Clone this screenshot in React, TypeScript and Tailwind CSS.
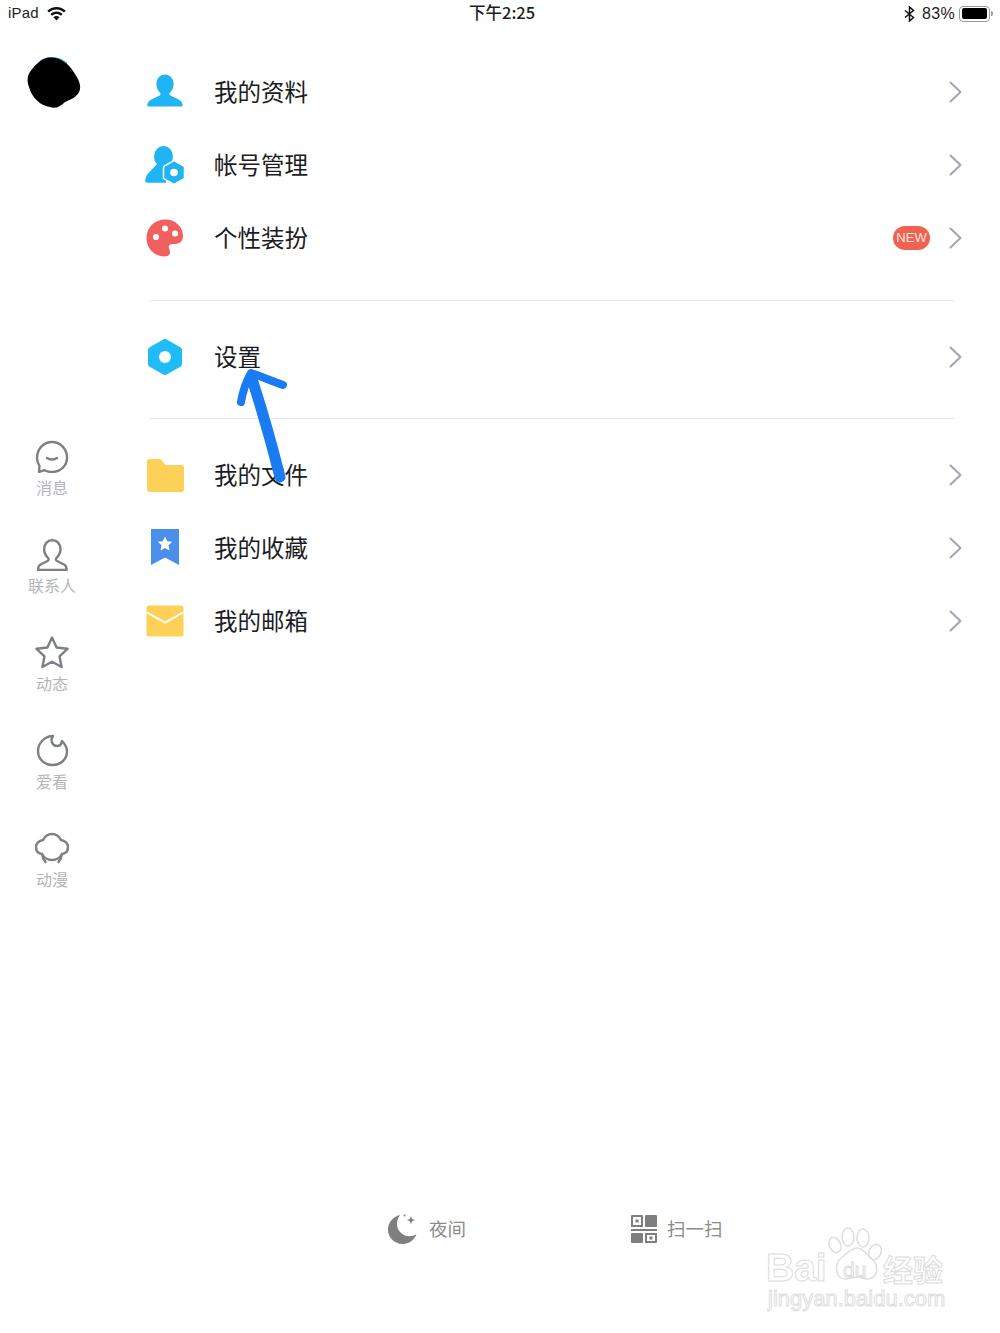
import React from 'react';

const cjk = "font-['Noto_Sans_CJK_SC','Noto_Sans',sans-serif]";

const Chevron = () => (
  <svg width="13" height="22" viewBox="0 0 13 22" fill="none" stroke="#a3a5b3" strokeWidth="2" strokeLinecap="round" strokeLinejoin="round">
    <path d="M1.500 1.500 L11.500 11 L1.500 20.500" />
  </svg>
);

const UserIcon = () => (
  <svg width="42" height="42" viewBox="0 0 42 42">
    <path fill="#1fb4f3" d="M21 3.500c5 0 8.600 4 8.600 9.500 0 3.700-1.500 6.800-3.700 8.800-.8.800-.6 2 .5 2.600l8.300 4c2.300 1.100 3.600 3 4 5.300.2 1-.5 1.800-1.500 1.800H4.800c-1 0-1.700-.8-1.500-1.800.4-2.300 1.700-4.200 4-5.300l8.300-4c1.100-.6 1.300-1.800.5-2.600-2.200-2-3.700-5.100-3.700-8.800C12.400 7.500 16 3.500 21 3.500z" />
  </svg>
);

const AccountIcon = () => (
  <svg width="42" height="42" viewBox="0 0 42 42">
    <ellipse cx="19.500" cy="12.500" rx="9.500" ry="10.500" fill="#1fb4f3" />
    <path fill="#1fb4f3" d="M14 19 L5.500 28 C3 30 1.500 33 1.200 36.500 C1.200 38 2 38.700 3.500 38.700 H22 V20 Z" />
    <path fill="#1fb4f3" stroke="#fff" strokeWidth="1.500" d="M30 16.500l9.800 5.600c.5.300.7.700.7 1.200v10.400c0 .5-.2 1-.7 1.200L30 40.500l-9.800-5.600c-.5-.2-.7-.7-.7-1.200V23.300c0-.5.200-.9.700-1.200z" />
    <circle cx="30" cy="28.500" r="3.800" fill="#fff" />
  </svg>
);

const PaletteIcon = () => (
  <svg width="42" height="42" viewBox="0 0 42 42">
    <path fill="#f1605f" d="M21.500 2.500C31.500 2.500 39 10 39 19c0 6-4.500 8.500-9.500 8-3.500-.3-5.500 1.500-4.500 4.500.8 2.200 1.500 3.500.6 5.500-.8 1.700-2.800 2.500-5.100 2.500C10.500 39.500 2.500 31.500 2.500 21S10.500 2.500 21.500 2.500z" />
    <circle cx="12" cy="20" r="3" fill="#fff" />
    <circle cx="21" cy="11.500" r="3" fill="#fff" />
    <circle cx="31" cy="16.500" r="3" fill="#fff" />
  </svg>
);

const HexIcon = () => (
  <svg width="42" height="42" viewBox="0 0 42 42">
    <path fill="#1fbcf8" d="M19.300 3.400c1.100-.6 2.300-.6 3.400 0l13.600 7.800c1 .6 1.700 1.700 1.700 2.900v13.800c0 1.200-.7 2.300-1.700 2.900l-13.600 7.800c-1.100.6-2.300.6-3.400 0L5.700 30.800C4.700 30.200 4 29.100 4 27.900V14.100c0-1.200.7-2.300 1.700-2.900z" />
    <circle cx="21" cy="21" r="6" fill="#fff" />
  </svg>
);

const FolderIcon = () => (
  <svg width="42" height="42" viewBox="0 0 42 42">
    <path fill="#fdd057" d="M3 7.500c0-1.400 1-2.500 2.500-2.500h9.500c1.200 0 2.200.6 3 1.700l3.500 4.300H37.500c1.400 0 2.500 1.100 2.500 2.500v22c0 1.400-1.100 2.500-2.500 2.500h-32C4 38 3 36.900 3 35.500z" />
  </svg>
);

const BookmarkIcon = () => (
  <svg width="42" height="42" viewBox="0 0 42 42">
    <path fill="#4a8fec" d="M7 2h28v36l-14-7.500L7 38z" />
    <path fill="#fff" d="M21 9.500l2.200 4.700 5 .6-3.700 3.500 1 5.100-4.500-2.500-4.500 2.500 1-5.100-3.700-3.500 5-.6z" />
  </svg>
);

const MailIcon = () => (
  <svg width="42" height="42" viewBox="0 0 42 42">
    <rect x="2.500" y="5.500" width="37" height="31" rx="2.500" fill="#fdd057" />
    <path d="M3 12.500 L21 22.500 L39 12.500" fill="none" stroke="#fff" strokeWidth="2" />
  </svg>
);

const rowsTop = [
  { label: '我的资料', icon: <UserIcon /> },
  { label: '帐号管理', icon: <AccountIcon /> },
  { label: '个性装扮', icon: <PaletteIcon />, badge: true },
];
const rowsBottom = [
  { label: '我的文件', icon: <FolderIcon /> },
  { label: '我的收藏', icon: <BookmarkIcon /> },
  { label: '我的邮箱', icon: <MailIcon /> },
];

const Row = ({ label, icon, badge }: { label: string; icon: React.ReactNode; badge?: boolean }) => (
  <div className="flex h-[73px] items-center">
    <div className="flex w-[42px] justify-center">{icon}</div>
    <span className={`ml-[28px] flex-1 text-[23.500px] text-[#1c1c24] ${cjk}`}>{label}</span>
    {badge && (
      <span className="mr-[19px] flex h-[24px] w-[37px] items-center justify-center rounded-full bg-[#f2634f] font-['Liberation_Sans',sans-serif] text-[13px] text-[#fde6e0]">
        NEW
      </span>
    )}
    <Chevron />
  </div>
);

const navIcons: Record<string, React.ReactNode> = {
  消息: (
    <>
      <path d="M4.500 27c-1.500-2.500-2.500-5-2.500-8C2 10 8.500 3 17 3s15 7 15 15.500S25.500 33 17 33c-3 0-5.500-.7-7.500-1.800L4 33z" />
      <path d="M12 19c2.500 2 7.500 2 10 0" />
    </>
  ),
  联系人: (
    <path d="M17 3c5 0 8.500 4 8.500 9 0 4-2 7-4 9-1 1-.6 2.500.6 3l7 3.500c1.600.8 2.500 2.500 2.500 5.500H3c0-3 .9-4.700 2.500-5.500l7-3.500c1.200-.5 1.600-2 .6-3-2-2-4-5-4-9 0-5 3.500-9 8.500-9z" />
  ),
  动态: (
    <path d="M17 2.500l4.600 10 10.900 1.300-8 7.500 2.100 10.700-9.600-5.300-9.600 5.300 2.100-10.700-8-7.500 10.900-1.300z" />
  ),
  爱看: (
    <path d="M18 3 C15 7 17 13 22 13 C25 13 26.500 11 27 8 C30 11 32 14.500 32 18.500 C32 26.500 25.500 32 17.500 32 C9.500 32 3 26 3 18 C3 10 10 3 18 3z" />
  ),
  动漫: (
    <>
      <path d="M8 9c2-4 5.500-6 9-6s7 2 9 6c4 .5 7 3.500 7 7 0 4-2.500 6.500-6 7-2 4-5.500 6-10 6s-8-2-10-6c-3.500-.5-6-3-6-7 0-3.500 3-6.500 7-7z" />
      <path d="M7 23c.5 3 1.500 5.500 3.500 8M27 23c-.5 3-1.500 5.500-3.500 8" />
    </>
  ),
};

const NavItem = ({ label }: { label: string }) => (
  <div className="flex h-[98px] flex-col items-center">
    <svg width="34" height="34" viewBox="0 0 34 34" fill="none" stroke="#7d7f88" strokeWidth="2.400" strokeLinejoin="round" strokeLinecap="round">
      {navIcons[label]}
    </svg>
    <span className={`mt-[2px] text-[16px] leading-[24px] text-[#b4b5bc] ${cjk}`}>{label}</span>
  </div>
);

export default function App() {
  return (
    <div className="relative flex h-[1333px] w-[1000px] flex-col overflow-hidden bg-white">
      {/* status bar */}
      <div className="relative flex h-[27px] items-center justify-between pl-2 pr-[7px] font-['Liberation_Sans',sans-serif] text-[15px] text-[#1d1d1f]">
        <div className="flex items-center gap-[8px]">
          <span className="tracking-[0.2px]">iPad</span>
          <svg width="19" height="14" viewBox="0 0 19 14" fill="#111">
            <path d="M9.500 0C5.800 0 2.700 1.400.3 3.700l1.700 1.800C4 3.600 6.600 2.500 9.500 2.500s5.500 1.100 7.500 3l1.700-1.800C16.300 1.400 13.200 0 9.500 0z" />
            <path d="M9.500 4.500c-2.400 0-4.500.9-6.100 2.400l1.700 1.800C6.300 7.700 7.800 7 9.500 7s3.200.7 4.400 1.700l1.700-1.800C14 5.400 11.900 4.500 9.500 4.500z" />
            <path d="M9.500 9c-1.200 0-2.300.4-3.100 1.200l3.100 3.300 3.100-3.300C11.800 9.400 10.700 9 9.500 9z" />
          </svg>
        </div>
        <span className={`absolute left-[469px] top-[1px] text-[16.500px] font-medium leading-[23px] ${cjk}`}>下午2:25</span>
        <div className="flex items-center">
          <svg width="11" height="16" viewBox="0 0 11 16" fill="none" stroke="#111" strokeWidth="1.500">
            <path d="M1 4.500 L9.500 11.500 L5.500 15 V1 L9.500 4.500 L1 11.500" />
          </svg>
          <span className="ml-[7px] text-[16px] tracking-[0.3px]">83%</span>
          <div className="ml-[4px] flex h-[16px] w-[31px] items-center rounded-[4px] border border-[#9a9a9a] p-[1.500px]">
            <div className="h-full w-[25px] rounded-[2px] bg-black" />
          </div>
          <div className="ml-[1px] h-[5px] w-[2px] rounded-r-sm bg-[#9a9a9a]" />
        </div>
      </div>

      <div className="flex flex-1">
        {/* left rail */}
        <aside className="flex w-[104px] flex-col items-center">
          <svg className="ml-[3px] mt-[30px]" width="54" height="52" viewBox="0 0 54 52">
            <path d="M13 4 C20 -1 32 -1 40 6" fill="none" stroke="#3ab5f0" strokeWidth="1" />
            <path fill="#000" d="M23 .5 C33 0 41 6 46 14 C50 20 54 26 53 32 C52 38 46 42 38 45 C33 50 28 52 23 50 C14 49 5 41 2 30 C-1 22 1 16 6 11 C11 5 16 1 23 .5z" />
          </svg>
          <div className="mt-[330px] flex flex-col">
            {['消息', '联系人', '动态', '爱看', '动漫'].map((label) => (
              <NavItem key={label} label={label} />
            ))}
          </div>
        </aside>

        {/* menu */}
        <main className="flex flex-1 flex-col pl-[40px] pr-[38px] pt-[28px]">
          {rowsTop.map((row) => (
            <Row key={row.label} {...row} />
          ))}
          <div className="ml-[5px] mr-[8px] mt-[26px] h-px bg-[#e6e6e8]" />
          <div className="mt-[19px]">
            <Row label="设置" icon={<HexIcon />} />
          </div>
          <div className="ml-[5px] mr-[8px] mt-[25px] h-px bg-[#e6e6e8]" />
          <div className="mt-[19px]">
            {rowsBottom.map((row) => (
              <Row key={row.label} {...row} />
            ))}
          </div>
        </main>
      </div>

      {/* bottom actions */}
      <div className={`flex h-[122px] shrink-0 pl-[387px] text-[18.500px] text-[#8c8c8c] ${cjk}`}>
        <div className="flex h-[36px] w-[244px] items-center">
          <svg width="32" height="32" viewBox="0 0 32 32" fill="#7f7f7f">
            <path d="M13 2C6 3.500 1 9.500 1 16.500 1 24.500 7.500 31 15.500 31c6.500 0 12-4 14-10-2 1.500-4.500 2.200-7.200 2.200C15.500 23.200 10 17.700 10 11c0-3.300 1-6.500 3-9z" />
            <path d="M24 3l1.100 3 3 1.100-3 1.100L24 11.200l-1.100-3-3-1.100 3-1.100z" />
            <circle cx="17.500" cy="2.500" r="1" />
          </svg>
          <span className="ml-[10px]">夜间</span>
        </div>
        <div className="flex h-[36px] items-center">
          <svg width="26" height="28" viewBox="0 0 26 28" fill="#7f7f7f">
            <path fillRule="evenodd" d="M1 0h10a1 1 0 0 1 1 1v11H0V1a1 1 0 0 1 1-1zM2 2v8h8V2zM4.500 4.500h3v3h-3z" />
            <rect x="14" y="0" width="12" height="12" rx="1" />
            <rect x="0" y="14" width="26" height="2" />
            <rect x="0" y="18" width="12" height="10" rx="1" />
            <path fillRule="evenodd" d="M14 18h12v9a1 1 0 0 1-1 1H14zM16 20v6h8v-6zM18.500 21.500h3v3h-3z" />
          </svg>
          <span className="ml-[10px]">扫一扫</span>
        </div>
      </div>

      {/* hand-drawn annotation over the menu */}
      <svg className="absolute left-[230px] top-[360px]" width="65" height="130" viewBox="0 0 65 130" fill="none" stroke="#1a7bf2" strokeLinecap="round" strokeLinejoin="round">
        <path d="M50 117 C42 85 32 50 22 19" strokeWidth="11" />
        <path d="M11 42 C13 30 17 20 21 13 C32 17 42 21 53 25" strokeWidth="8" />
      </svg>

      {/* baidu watermark */}
      <div className="absolute left-[766px] top-[1224px] h-[100px] w-[190px]">
        <svg className="absolute left-[60px] top-[2px]" width="60" height="58" viewBox="0 0 60 58" fill="none" stroke="#dedede" strokeWidth="1.500">
          <ellipse cx="9" cy="19" rx="5.500" ry="8" transform="rotate(-25 9 19)" />
          <ellipse cx="22" cy="11" rx="6" ry="9" />
          <ellipse cx="37" cy="12" rx="6" ry="9" />
          <ellipse cx="49" cy="26" rx="6" ry="8" transform="rotate(25 49 26)" />
          <path d="M31 22c6 0 9 6 14 10 8 6 8 20-3 21-4 0-7-2-11-2s-8 2-12 2c-10-1-11-14-4-21 6-4 10-10 16-10z" />
        </svg>
        <span className="absolute left-0 top-[22px] font-['Liberation_Sans',sans-serif] text-[39px] font-bold leading-[44px] text-transparent [-webkit-text-stroke:1px_#dcdcdc]">
          Bai
        </span>
        <span className="absolute left-[77px] top-[33px] font-['Liberation_Sans',sans-serif] text-[21px] leading-[26px] text-transparent [-webkit-text-stroke:1px_#dcdcdc]">
          du
        </span>
        <span className={`absolute left-[117px] top-[26px] text-[30px] font-bold leading-[36px] text-transparent [-webkit-text-stroke:1px_#dcdcdc] ${cjk}`}>
          经验
        </span>
        <span className="absolute left-[2px] top-[62px] font-['Liberation_Sans',sans-serif] text-[22px] leading-[26px] text-transparent [-webkit-text-stroke:1px_#dedede]">
          jingyan.baidu.com
        </span>
      </div>
    </div>
  );
}
